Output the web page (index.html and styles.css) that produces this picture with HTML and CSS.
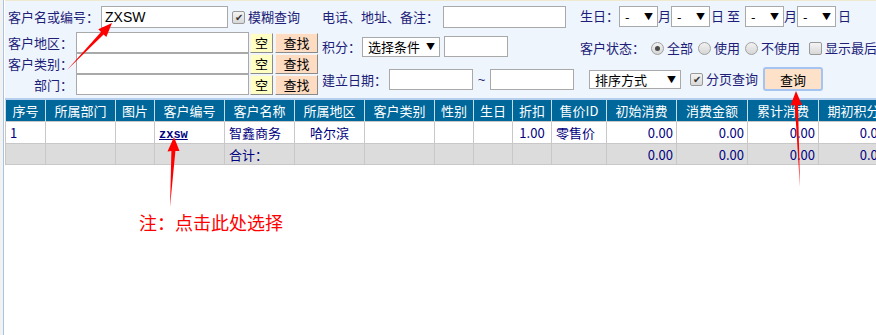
FILE: index.html
```html
<!DOCTYPE html>
<html lang="zh-CN">
<head>
    <meta charset="UTF-8">
    <title>客户查询</title>
    <link rel="stylesheet" href="styles.css">
</head>
<body>
<div class="page">
    <form class="search">
        <div class="col col-left">
            <div class="row row-name">
                <label class="lbl w-name">客户名或编号：</label>
                <input class="txt in-name" type="text" value="ZXSW">
                <span class="chk on">✔</span><span class="opt">模糊查询</span>
            </div>
            <div class="pick-grid">
                <label class="lbl">客户地区：</label>
                <input class="txt" type="text">
                <button type="button" class="btn-clear">空</button>
                <button type="button" class="btn-find">查找</button>

                <label class="lbl">客户类别：</label>
                <input class="txt" type="text">
                <button type="button" class="btn-clear">空</button>
                <button type="button" class="btn-find">查找</button>

                <label class="lbl">部门：</label>
                <input class="txt" type="text">
                <button type="button" class="btn-clear">空</button>
                <button type="button" class="btn-find">查找</button>
            </div>
        </div>

        <div class="col col-mid">
            <div class="row row-1">
                <label class="lbl w-memo">电话、地址、备注：</label>
                <input class="txt in-memo" type="text">
            </div>
            <div class="row row-2">
                <label class="lbl w-score">积分：</label>
                <span class="sel sel-cond">选择条件<i>▼</i></span>
                <input class="txt in-score" type="text">
            </div>
            <div class="row row-3">
                <label class="lbl w-date">建立日期：</label>
                <input class="txt in-date" type="text">
                <span class="tilde">~</span>
                <input class="txt in-date" type="text">
            </div>
        </div>

        <div class="col col-right">
            <div class="row row-1">
                <label class="lbl w-birth">生日：</label>
                <span class="sel sel-day">-<i>▼</i></span><span class="unit">月</span>
                <span class="sel sel-day">-<i>▼</i></span><span class="unit u-to">日 至</span>
                <span class="sel sel-day">-<i>▼</i></span><span class="unit">月</span>
                <span class="sel sel-day">-<i>▼</i></span><span class="unit u-end">日</span>
            </div>
            <div class="row row-2">
                <label class="lbl w-state">客户状态：</label>
                <span class="radio on"></span><span class="opt">全部</span>
                <span class="radio"></span><span class="opt">使用</span>
                <span class="radio"></span><span class="opt">不使用</span>
                <span class="chk chk-last"></span><span class="opt">显示最后</span>
            </div>
            <div class="row row-3">
                <span class="sel sel-sort">排序方式<i>▼</i></span>
                <span class="chk on">✔</span><span class="opt">分页查询</span>
                <button type="button" class="btn-query">查询</button>
            </div>
        </div>
    </form>

    <table class="grid">
        <colgroup>
            <col style="width:40px"><col style="width:70px"><col style="width:39px"><col style="width:70px">
            <col style="width:70px"><col style="width:70px"><col style="width:70px"><col style="width:39px">
            <col style="width:39px"><col style="width:39px"><col style="width:55px"><col style="width:70px">
            <col style="width:71px"><col style="width:71px"><col style="width:70px">
        </colgroup>
        <thead>
            <tr>
                <th>序号</th><th>所属部门</th><th>图片</th><th>客户编号</th><th>客户名称</th>
                <th>所属地区</th><th>客户类别</th><th>性别</th><th>生日</th><th>折扣</th>
                <th>售价ID</th><th>初始消费</th><th>消费金额</th><th>累计消费</th><th>期初积分</th>
            </tr>
        </thead>
        <tbody>
            <tr class="data">
                <td>1</td><td></td><td></td><td><a class="code" href="#">zxsw</a></td><td>智鑫商务</td>
                <td class="c">哈尔滨</td><td></td><td></td><td></td><td class="c">1.00</td>
                <td>零售价</td><td class="r">0.00</td><td class="r">0.00</td><td class="r">0.00</td><td class="r">0.00</td>
            </tr>
            <tr class="total">
                <td></td><td></td><td></td><td></td><td>合计：</td>
                <td></td><td></td><td></td><td></td><td></td>
                <td></td><td class="r">0.00</td><td class="r">0.00</td><td class="r">0.00</td><td class="r">0.00</td>
            </tr>
        </tbody>
    </table>

    <p class="note">注：点击此处选择</p>

    <!-- annotation arrows drawn over the page -->
    <svg class="arrows" width="876" height="335" viewBox="0 0 876 335">
        <polygon points="67,70 101,31.9 98.3,29.3 112,23 106.3,36.9 103.6,34.4" fill="#ff0000"/>
        <polygon points="170,207 171.4,151 167.5,151.5 174,137 179.5,151 175.4,151" fill="#ff0000"/>
        <polygon points="800,187 794.8,105 790.5,105.5 796,91 802,105 798,105" fill="#ff0000"/>
    </svg>
</div>
</body>
</html>
```

FILE: styles.css
```css
/* Base */
body {
    margin: 0;
    padding: 0 0 0 3px;
    background: #f2f2f2;
    font-family: "Noto Sans CJK SC", "Noto Sans", sans-serif;
    font-size: 13px;
    color: #1e1e78;
    overflow: hidden;
}

.page {
    position: relative;
    height: 335px;
    background: #ffffff;
    border-left: 1px solid #a9c3e3;
    padding-left: 1px;
    overflow: hidden;
}

/* Search panel */
.search {
    display: flex;
    height: 97px;
    margin: 0;
    background: #eef5fd;
    border-top: 1px solid #efe9cf;
    border-bottom: 2px solid #b6cfee;
}

.col {
    display: flex;
    flex-direction: column;
    flex-shrink: 0;
}

.col-left {
    width: 314px;
    padding: 5px 0 0 3px;
}

.col-mid {
    width: 257px;
    padding-top: 5px;
}

.col-right {
    flex: 1 1 0;
    min-width: 0;
    overflow: hidden;
    padding: 4px 0 0 1px;
    white-space: nowrap;
}

.row {
    display: flex;
    align-items: center;
    white-space: nowrap;
}

.row > * {
    flex-shrink: 0;
}

.lbl {
    display: inline-block;
    line-height: 20px;
}

.opt {
    line-height: 20px;
}

.txt {
    box-sizing: border-box;
    height: 21px;
    margin: 0;
    padding: 0 3px;
    border: 1px solid #a9a9a9;
    background: #ffffff;
    font-family: "Liberation Sans", Arial, sans-serif;
    font-size: 14px;
    color: #000;
    outline: none;
}

/* left column */
.row-name {
    height: 22px;
}

.w-name { width: 93px; }

.in-name {
    width: 127px;
    height: 22px;
    margin-right: 4px;
}

.pick-grid {
    display: grid;
    grid-template-columns: 67px 173px 23px 44px;
    grid-auto-rows: 21px;
    column-gap: 1px;
    margin-top: 4px;
    align-items: center;
}

.pick-grid .lbl {
    text-align: right;
    padding-right: 2px;
}

.pick-grid .txt {
    width: 173px;
}

.btn-clear,
.btn-find {
    box-sizing: border-box;
    height: 20px;
    margin: 0;
    padding: 0;
    border: 1px solid;
    border-color: #f4f4f4 #8a8a8a #8a8a8a #f4f4f4;
    font-family: inherit;
    font-size: 13px;
    color: #000;
    line-height: 16px;
}

.btn-clear {
    background: #ffffc4;
}

.btn-find {
    margin-left: 1px;
    background: #fddcc2;
}

/* middle column */
.col-mid .row-1 { height: 22px; }
.col-mid .row-2 { height: 21px; margin-top: 8px; }
.col-mid .row-3 { height: 21px; margin-top: 12px; }

.w-memo { width: 121px; }
.in-memo { width: 123px; height: 22px; }

.w-score { width: 40px; }
.in-score { width: 64px; margin-left: 4px; }

.w-date { width: 67px; }
.in-date { width: 84px; }

.tilde {
    width: 17px;
    text-align: center;
    font-family: "Liberation Sans", Arial, sans-serif;
}

/* selects */
.sel {
    box-sizing: border-box;
    display: inline-flex;
    align-items: center;
    justify-content: space-between;
    height: 20px;
    padding: 0 4px 0 5px;
    border: 1px solid #a9a9a9;
    background: #ffffff;
    color: #000;
}

.sel i {
    font-style: normal;
    font-size: 9px;
}

.sel-cond {
    width: 78px;
    justify-content: flex-start;
}

.sel-cond i {
    margin-left: 6px;
}

.sel-day {
    width: 39px;
    height: 21px;
}

.sel-sort {
    width: 92px;
    height: 19px;
    margin-left: 9px;
}

.unit {
    width: 13px;
    line-height: 20px;
}

.u-to {
    width: 34px;
    padding-left: 1px;
}

.u-end {
    padding-left: 2px;
}

/* right column */
.col-right .row-1 { height: 22px; }
.col-right .row-2 { height: 20px; margin-top: 11px; }
.col-right .row-3 { height: 24px; margin-top: 9px; }

.w-birth { width: 39px; }
.w-state { width: 71px; }

.radio {
    box-sizing: border-box;
    width: 13px;
    height: 13px;
    margin-right: 3px;
    border: 1px solid #a0a0a0;
    border-radius: 50%;
    background: linear-gradient(#f2f2f2, #d6d6d6);
    position: relative;
}

.radio.on::after {
    content: "";
    position: absolute;
    left: 3px;
    top: 3px;
    width: 5px;
    height: 5px;
    border-radius: 50%;
    background: #4a4a4a;
}

.row-2 .opt {
    margin-right: 5px;
}

.chk {
    box-sizing: border-box;
    display: inline-flex;
    align-items: center;
    justify-content: center;
    width: 13px;
    height: 13px;
    margin-right: 3px;
    border: 1px solid #9a9a9a;
    border-radius: 2px;
    background: linear-gradient(#f4f4f4, #d8d8d8);
    font-size: 10px;
    line-height: 1;
    color: #333;
}

.chk-last {
    margin-left: 4px;
}

.row-3 .chk {
    margin-left: 9px;
}

.btn-query {
    box-sizing: border-box;
    width: 60px;
    height: 24px;
    margin-left: 5px;
    padding: 0;
    border: 2px solid #a6c4f2;
    border-radius: 3px;
    background: #fde2c9;
    font-family: inherit;
    font-size: 13px;
    color: #000;
}

/* Result table */
.grid {
    border-collapse: collapse;
    table-layout: fixed;
    width: 883px;
    font-size: 13px;
    color: #000080;
}

.grid th {
    height: 21px;
    padding: 0;
    background: #00679a;
    color: #ffffff;
    font-weight: normal;
    text-align: center;
    border-left: 1px solid #c9dce9;
    border-right: 1px solid #c9dce9;
}

.grid td {
    height: 21px;
    padding: 0 4px;
    border: 1px solid #c8c8c8;
    white-space: nowrap;
    overflow: hidden;
}

.grid td.c { text-align: center; }
.grid td.r { text-align: right; padding-right: 3px; }

.grid tr.total td {
    height: 20px;
    background: #dcdcdc;
}

.code {
    font-family: "Liberation Mono", "DejaVu Sans Mono", monospace;
    font-size: 12px;
    font-weight: bold;
    color: #000080;
    text-decoration: underline;
}

/* Annotation */
.note {
    margin: 46px 0 0 134px;
    font-size: 18px;
    line-height: 22px;
    color: #ff0000;
}

.arrows {
    position: absolute;
    left: -4px;
    top: 0;
    pointer-events: none;
}
```
